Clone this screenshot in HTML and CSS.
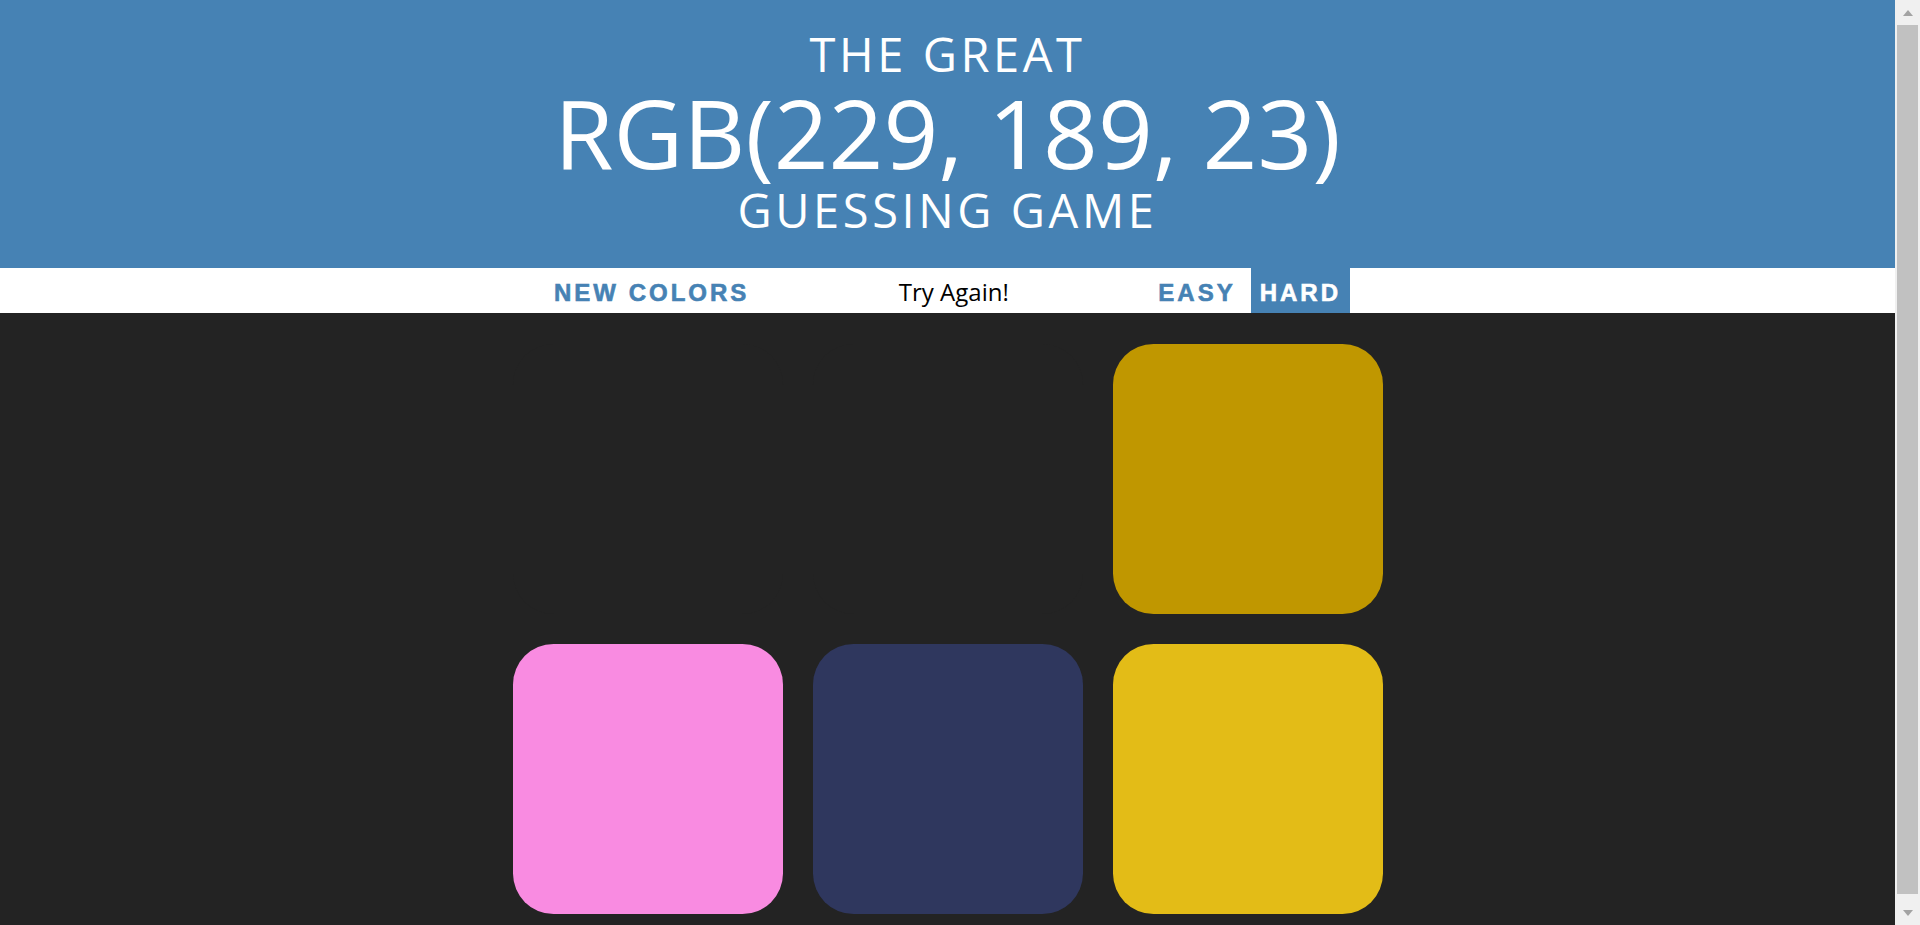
FILE: index.html
```html
<!DOCTYPE html>
<html lang="en">
<head>
<meta charset="utf-8">
<title>Color Game</title>
<link rel="stylesheet" href="styles.css">
</head>
<body>
<div class="page">
  <header class="title">
    <span class="title-line">The Great</span>
    <span class="title-rgb">RGB(229, 189, 23)</span>
    <span class="title-line">Guessing Game</span>
  </header>
  <nav class="stripe">
    <button class="btn">New Colors</button>
    <span class="message">Try Again!</span>
    <button class="btn">Easy</button>
    <button class="btn selected">Hard</button>
  </nav>
  <main class="board">
    <div class="square hidden"></div>
    <div class="square hidden"></div>
    <div class="square sq-ochre"></div>
    <div class="square sq-pink"></div>
    <div class="square sq-navy"></div>
    <div class="square sq-gold"></div>
  </main>
</div>
<div class="scrollbar">
  <div class="sb-btn"><span class="arrow-up"></span></div>
  <div class="sb-track"><div class="sb-thumb"></div></div>
  <div class="sb-btn"><span class="arrow-down"></span></div>
</div>
</body>
</html>
```

FILE: styles.css
```css
html, body {
  margin: 0;
  height: 100%;
  overflow: hidden;
}
body {
  display: flex;
  background: #232323;
  font-family: "Open Sans", "DejaVu Sans", sans-serif;
}
.page {
  flex: 1;
  min-width: 0;
}
.title {
  display: block;
  background: #4682b4;
  color: #ffffff;
  text-align: center;
  text-transform: uppercase;
  padding: 25px 0 29px;
}
.title-line {
  display: block;
  font-size: 47px;
  line-height: 58px;
  letter-spacing: 3.6px;
}
.title-rgb {
  display: block;
  font-size: 96px;
  line-height: 98px;
}
.stripe {
  display: flex;
  justify-content: center;
  align-items: stretch;
  gap: 6px;
  height: 45px;
  background: #ffffff;
  font-size: 24px;
}
.btn {
  border: none;
  background: none;
  margin: 0;
  padding: 4px 9px 0;
  font-family: "Liberation Sans", Arial, sans-serif;
  font-size: 24px;
  font-weight: 700;
  letter-spacing: 3px;
  text-transform: uppercase;
  color: #4682b4;
  -webkit-text-stroke: 0.6px currentColor;
  cursor: pointer;
}
.btn.selected {
  background: #4682b4;
  color: #ffffff;
}
.message {
  width: 20%;
  text-align: center;
  color: #000000;
  padding-top: 2px;
  line-height: 43px;
}
.board {
  display: grid;
  grid-template-columns: repeat(3, 270px);
  gap: 30px;
  justify-content: center;
  padding: 31px 0 30px;
}
.square {
  height: 270px;
  border-radius: 40.5px;
}
.hidden { background: #232323; }
.sq-ochre { background: #c09700; }
.sq-pink { background: #f98be1; }
.sq-navy { background: #2f375e; }
.sq-gold { background: #e3bc17; }

.scrollbar {
  width: 25px;
  flex: none;
  display: flex;
  flex-direction: column;
  background: #f0f0f0;
}
.sb-btn {
  height: 25px;
  display: flex;
  justify-content: center;
  align-items: center;
}
.sb-track {
  flex: 1;
  padding: 0 2px 6px;
  display: flex;
}
.sb-thumb {
  flex: 1;
  background: #c1c1c1;
}
.arrow-up {
  width: 0;
  height: 0;
  border-left: 5.5px solid transparent;
  border-right: 5.5px solid transparent;
  border-bottom: 6px solid #a3a3a3;
}
.arrow-down {
  width: 0;
  height: 0;
  border-left: 5.5px solid transparent;
  border-right: 5.5px solid transparent;
  border-top: 6px solid #a3a3a3;
}
```
